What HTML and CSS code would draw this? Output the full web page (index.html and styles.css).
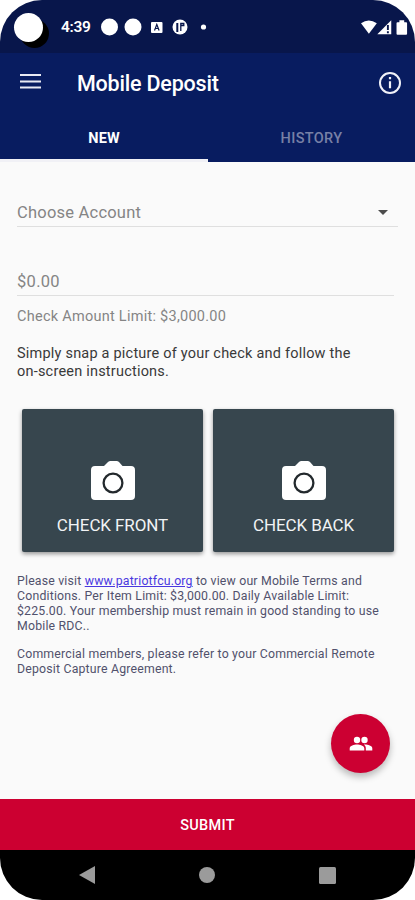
FILE: index.html
```html
<!DOCTYPE html>
<html lang="en">
<head>
<meta charset="utf-8">
<title>Mobile Deposit</title>
<link rel="stylesheet" href="styles.css">
</head>
<body>
<div class="phone">
  <div class="status">
    <span class="lens"></span>
    <span class="clock">4:39</span>
    <svg class="notices" width="106" height="20" viewBox="0 0 106 20">
      <g fill="#fff">
        <circle cx="8.500" cy="10" r="8.500"/><circle cx="32" cy="10" r="8.500"/>
        <rect x="50" y="5" width="11.500" height="11" rx="1"/>
        <circle cx="79" cy="10" r="7.500"/><circle cx="102.500" cy="10" r="2.600"/>
      </g>
      <path d="M53.500 13.500l2.300-6 2.300 6M54.400 11.500h2.800" fill="none" stroke="#08164b" stroke-width="1.200"/>
      <path d="M76.300 6v9" fill="none" stroke="#08164b" stroke-width="2"/>
      <path d="M79.800 14V6.500h3v2h-3" fill="none" stroke="#08164b" stroke-width="1.300"/>
    </svg>
    <svg class="signals" width="50" height="18" viewBox="0 0 50 18">
      <g fill="#fff">
        <path d="M0 4Q8-1.500 16.500 4L8.200 15z"/>
        <path d="M17 15.500L31.500 1v14.500z"/>
        <path d="M38 3h2V1h5v2h2q1 0 1 1v11q0 1-1 1h-9q-1 0-1-1V4q0-1 1-1z"/>
      </g>
      <path d="M28 6v5M28 12.500v2" stroke="#08164b" stroke-width="2"/>
    </svg>
  </div>
  <header class="bar">
    <svg class="menu" width="22" height="16" viewBox="0 0 22 16"><path d="M0 2h21M0 8.500h21M0 14.500h21" stroke="#e9eaf3" stroke-width="2"/></svg>
    <h1>Mobile Deposit</h1>
    <svg class="info" width="24" height="24" viewBox="0 0 24 24"><circle cx="12" cy="12" r="10" fill="none" stroke="#f0f1f8" stroke-width="2"/><path d="M12 6v2.300M12 10.300v7" stroke="#f0f1f8" stroke-width="2.200"/></svg>
  </header>
  <nav class="tabs">
    <div class="tab active"><span>NEW</span></div>
    <div class="tab"><span>HISTORY</span></div>
  </nav>
  <main>
    <div class="select"><span>Choose Account</span><svg width="10" height="5" viewBox="0 0 10 5"><path d="M0 0h10L5 5z" fill="#4c4c4c"/></svg></div>
    <div class="amount"><span>$0.00</span></div>
    <p class="limit">Check Amount Limit: $3,000.00</p>
    <p class="hint">Simply snap a picture of your check and follow the<br>on-screen instructions.</p>
    <div class="cards">
      <div class="card">
        <svg width="44" height="40" viewBox="0 0 44 40"><path d="M4 5h9l4-4q1-1 2.500-1h6Q27 0 28 1l3.500 4H40q4 0 4 4v26q0 4-4 4H4q-4 0-4-4V9q0-4 4-4z" fill="#fff"/><circle cx="22" cy="22" r="9.400" fill="#fff" stroke="#23292d" stroke-width="2.300"/></svg>
        <span>CHECK FRONT</span>
      </div>
      <div class="card">
        <svg width="44" height="40" viewBox="0 0 44 40"><path d="M4 5h9l4-4q1-1 2.500-1h6Q27 0 28 1l3.500 4H40q4 0 4 4v26q0 4-4 4H4q-4 0-4-4V9q0-4 4-4z" fill="#fff"/><circle cx="22" cy="22" r="9.400" fill="#fff" stroke="#23292d" stroke-width="2.300"/></svg>
        <span>CHECK BACK</span>
      </div>
    </div>
    <div class="legal">
      <p>Please visit <a>www.patriotfcu.org</a> to view our Mobile Terms and<br>Conditions. Per Item Limit: $3,000.00. Daily Available Limit:<br>$225.00. Your membership must remain in good standing to use<br>Mobile RDC..</p>
      <p>Commercial members, please refer to your Commercial Remote<br>Deposit Capture Agreement.</p>
    </div>
    <div class="fab"><svg width="24" height="16" viewBox="0 0 24 16"><g fill="#fff"><circle cx="8" cy="4" r="3.200"/><circle cx="15.500" cy="4" r="3.200"/><path d="M.7 14.500v-2.300c0-2.600 4.500-3.800 7.300-3.800s7.300 1.200 7.300 3.800v2.300zM16.800 14.500v-2.300c0-1.500-.8-2.700-2-3.600 3-.3 8.500.8 8.500 3.600v2.300z"/></g></svg></div>
  </main>
  <div class="submit"><span>SUBMIT</span></div>
  <div class="navbar">
    <svg width="16" height="18" viewBox="0 0 16 18"><path d="M0 9L16 0v18z" fill="#9b9b9b"/></svg>
    <svg width="16" height="16" viewBox="0 0 16 16"><circle cx="8" cy="8" r="8" fill="#9b9b9b"/></svg>
    <svg width="17" height="17" viewBox="0 0 17 17"><rect width="17" height="17" rx="1.500" fill="#9b9b9b"/></svg>
  </div>
</div>
</body>
</html>
```

FILE: styles.css
```css
* { box-sizing: border-box; }
body { margin: 0; background: #fff; font-family: Roboto, "Liberation Sans", sans-serif; }
h1, p { margin: 0; }
svg { display: block; flex: none; }
.phone { width: 415px; height: 900px; display: flex; flex-direction: column; overflow: hidden; border-radius: 42px; background: #fafafa; white-space: nowrap; }
.status { height: 53px; flex: none; background: #08164b; display: flex; align-items: flex-start; padding: 0 6px 0 14px; color: #fff; }
.lens { width: 29px; height: 29px; border-radius: 50%; background: #fff; margin-top: 13px; box-shadow: 6px 6px 0 #000; }
.clock { margin: 17px 0 0 18px; width: 40px; font-size: 15.5px; line-height: 20px; font-weight: 600; letter-spacing: -.3px; }
.notices { margin-top: 17px; }
.signals { margin: 19px 0 0 auto; width: 48px; }
.bar { height: 62px; flex: none; background: #081c60; display: flex; align-items: flex-start; padding: 0 13px 0 20px; color: #fff; }
.menu { margin-top: 20px; }
h1 { margin: 17px 0 0 35px; font-size: 21.5px; line-height: 28px; font-weight: 500; letter-spacing: -.2px; }
.info { margin: 18px 0 0 auto; }
.tabs { height: 47px; flex: none; display: grid; grid-template-columns: 208px 207px; background: #081c60; }
.tab { display: flex; justify-content: center; padding-top: 14px; font-size: 14.5px; line-height: 20px; font-weight: 500; letter-spacing: .35px; color: #7780a6; }
.active { color: #fff; border-bottom: 3px solid #f1f1f6; font-weight: 700; letter-spacing: .1px; }
main { height: 637px; flex: none; padding: 0 17px; display: flex; flex-direction: column; position: relative; color: #858585; }
.select { height: 65px; border-bottom: 1px solid #dfdfdf; display: flex; justify-content: space-between; padding: 40px 10px 0 0; font-size: 16.5px; line-height: 22px; letter-spacing: .22px; }
.select svg { margin-top: 8px; }
.amount { height: 69px; width: 377px; border-bottom: 1px solid #dfdfdf; padding-top: 44px; font-size: 16.5px; line-height: 22px; letter-spacing: .3px; }
.limit { height: 48px; padding-top: 10px; font-size: 14.5px; line-height: 21px; letter-spacing: .26px; }
.hint { height: 65px; padding-top: 1px; font-size: 14.5px; line-height: 17.5px; letter-spacing: .21px; color: #393939; }
.cards { height: 143px; display: grid; grid-template-columns: 181px 181px; gap: 10px; margin-left: 5px; }
.card { background: #37464e; border-radius: 2px; box-shadow: 0 2px 4px #0006; display: flex; flex-direction: column; align-items: center; padding: 52px 0 0; color: #f1f3f5; font-size: 17px; line-height: 22px; letter-spacing: -.1px; }
.card span { margin-top: 13px; }
.legal { padding-top: 22px; font-size: 12.3px; line-height: 15px; letter-spacing: .19px; color: #51516c; }
.legal p + p { margin-top: 13px; }
.legal a { color: #4938df; text-decoration: underline; }
.fab { position: absolute; left: 331px; top: 552px; width: 59px; height: 59px; border-radius: 50%; background: #cc0032; box-shadow: 0 4px 7px #0004; display: grid; place-items: center; }
.submit { height: 51px; flex: none; background: #cc0031; color: #fff; display: grid; place-items: center; padding-top: 1px; font-size: 14.5px; font-weight: 500; letter-spacing: .3px; }
.navbar { height: 50px; background: #000; display: flex; align-items: center; justify-content: space-between; padding: 0 79px; }
```
